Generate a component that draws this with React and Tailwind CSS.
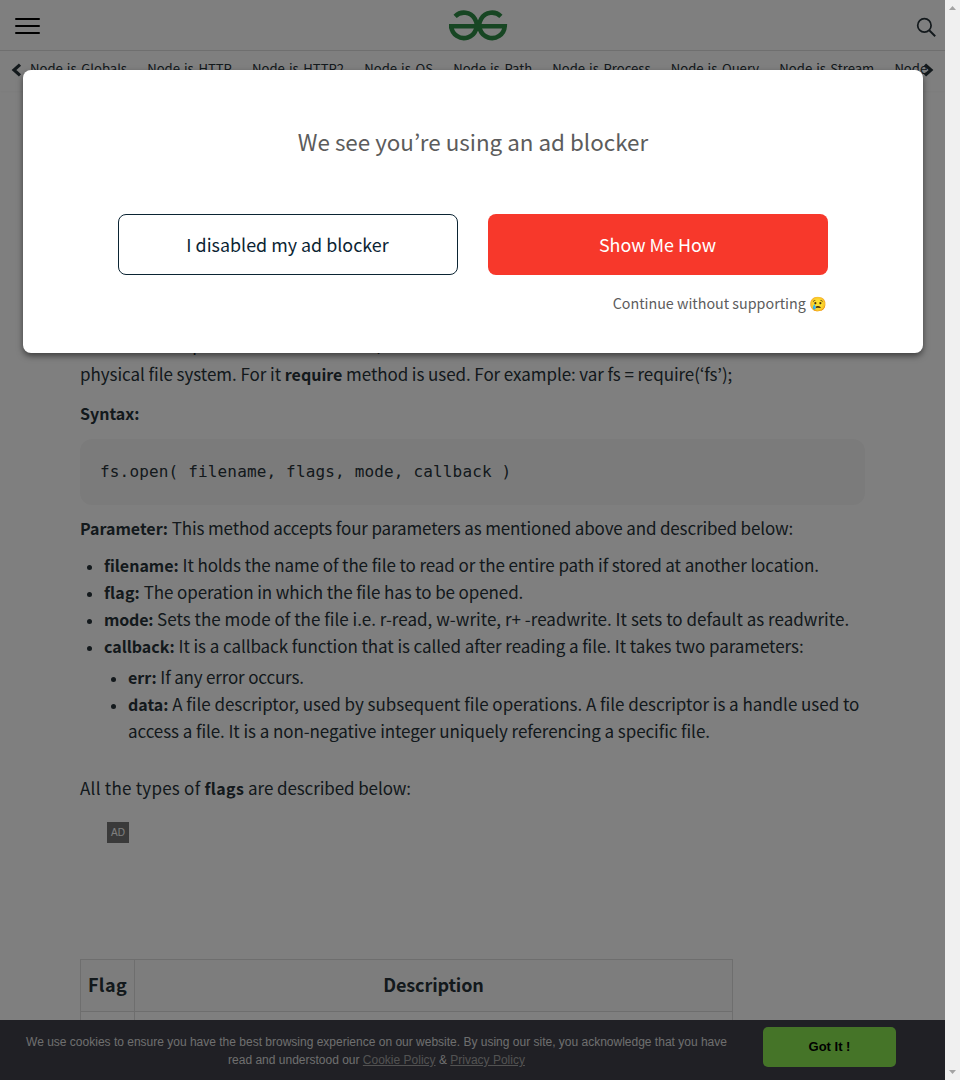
const navItems = [
  "Node.js-Globals",
  "Node.js-HTTP",
  "Node.js-HTTP2",
  "Node.js-OS",
  "Node.js-Path",
  "Node.js-Process",
  "Node.js-Query",
  "Node.js-Stream",
  "Node",
];

function B({ children, className = "" }) {
  return <strong className={`text-[16px] leading-none font-bold ${className}`}>{children}</strong>;
}

function Logo() {
  return (
    <svg width="60" height="32" viewBox="0 0 60 32" fill="none" stroke="#2f8d46" strokeWidth="4.6">
      <path d="M52.9 7.3A12.7 12.7 0 1 0 56.7 17.3H1" />
      <path d="M7.1 7.3A12.7 12.7 0 1 1 3.3 17.3" />
    </svg>
  );
}

function Chevron({ d, className }) {
  return (
    <svg width="11" height="14" viewBox="0 0 11 14" fill="none" stroke="#273239" strokeWidth="3.2" className={className}>
      <path d={d} />
    </svg>
  );
}

function Header() {
  return (
    <header className="flex h-[51px] shrink-0 items-start justify-between border-b border-[#dedede] pl-[15px] pr-2">
      <div className="flex w-[26px] flex-col gap-[5px] pt-[18px]">
        <span className="h-[2px] w-[25px] rounded bg-black" />
        <span className="h-[2px] w-[25px] rounded bg-black" />
        <span className="h-[2px] w-[25px] rounded bg-black" />
      </div>
      <div className="pr-px pt-[9px]">
        <Logo />
      </div>
      <svg width="21" height="22" viewBox="0 0 21 22" fill="none" stroke="#273239" strokeWidth="1.7" className="mt-[17px]">
        <circle cx="8.4" cy="8.4" r="6.7" />
        <path d="M13.2 13.3L19.2 19.3" strokeWidth="2" />
      </svg>
    </header>
  );
}

function TopicBar() {
  return (
    <nav className="flex h-10 shrink-0 items-start pl-[11px] pr-[11px] shadow-[0_1px_2px_rgba(0,0,0,0.03)]">
      <Chevron d="M9 1.6L3 7L9 12.4" className="mt-3 shrink-0" />
      <div className="ml-[8px] flex h-full min-w-0 flex-1 gap-[20.2px] overflow-hidden whitespace-nowrap text-[13.1px] leading-[35px]">
        {navItems.map((item) => (
          <span key={item}>{item}</span>
        ))}
      </div>
      <Chevron d="M2 1.6L8 7L2 12.4" className="mt-3 -ml-[5px] shrink-0" />
    </nav>
  );
}

function Article() {
  return (
    <main className="flex-1 whitespace-nowrap px-20 pt-[239px] text-[17px] leading-[27px]">
      <p>
        <span className="mb-[3px] block">does several operations on a file. First, we need to load the fs class which is a module to access the</span>
        <span className="whitespace-pre tracking-[-0.05px]">{"physical file system. For it "}</span>
        <B>require</B>
        <span className="whitespace-pre tracking-[-0.08px]">{" method is used. For example: var fs = require(‘fs’);"}</span>
      </p>
      <p className="mt-3">
        <B>Syntax:</B>
      </p>
      <pre className="mt-[13px] h-[66px] rounded-xl bg-[#f7f7f7] pl-5 pt-5 font-['DejaVu_Sans_Mono',monospace] text-[16px] leading-[25px] tracking-[0.162px]">
        fs.open( filename, flags, mode, callback )
      </pre>
      <p className="mt-[9px]">
        <B>Parameter:</B>
        <span className="whitespace-pre tracking-[-0.145px]">{" This method accepts four parameters as mentioned above and described below:"}</span>
      </p>
      <ul className="mt-[10px] list-disc pl-6 marker:text-[14px]">
        <li>
          <B>filename:</B>
          <span className="tracking-[-0.09px]"> It holds the name of the file to read or the entire path if stored at another location.</span>
        </li>
        <li>
          <B className="tracking-[0.15px]">flag:</B>
          <span className="tracking-[-0.1px]"> The operation in which the file has to be opened.</span>
        </li>
        <li>
          <B className="tracking-[-0.2px]">mode:</B>
          <span className="tracking-[0.02px]"> Sets the mode of the file i.e. r-read, w-write, r+ -readwrite. It sets to default as readwrite.</span>
        </li>
        <li>
          <B>callback:</B>
          <span className="tracking-[-0.065px]"> It is a callback function that is called after reading a file. It takes two parameters:</span>
          <ul className="mt-1 list-disc pl-6">
            <li>
              <B>err:</B>
              <span className="tracking-[-0.17px]"> If any error occurs.</span>
            </li>
            <li>
              <B>data:</B>
              <span className="tracking-[-0.03px]"> A file descriptor, used by subsequent file operations. A file descriptor is a handle used to</span>
              <br />
              <span className="tracking-[-0.075px]">access a file. It is a non-negative integer uniquely referencing a specific file.</span>
            </li>
          </ul>
        </li>
      </ul>
      <p className="mt-[30px]">
        <span className="whitespace-pre tracking-[0.24px]">{"All the types of "}</span>
        <B className="tracking-[0.4px]">flags</B>
        <span className="tracking-[-0.09px]"> are described below:</span>
      </p>
      <div className="ml-[27px] mt-[21px] flex h-[21px] w-[22px] items-center justify-center bg-[#757575] font-['Liberation_Sans',sans-serif] text-[10px] text-white">
        AD
      </div>
      <table className="mt-[116px] w-[653px] table-fixed border-collapse text-[18px]">
        <thead>
          <tr className="h-[52px] bg-[#fafafa]">
            <th className="w-[54px] border border-[#dddddd] p-0 pb-0.5 font-bold tracking-[0.4px]">Flag</th>
            <th className="border border-[#dddddd] p-0 pb-0.5 font-bold tracking-[-0.15px]">Description</th>
          </tr>
        </thead>
        <tbody>
          <tr className="h-[52px]">
            <td className="border border-[#dddddd]" />
            <td className="border border-[#dddddd]" />
          </tr>
        </tbody>
      </table>
    </main>
  );
}

function CookieBar() {
  return (
    <footer className="absolute inset-x-0 bottom-0 flex h-[60px] items-start bg-[#40414b] pl-[18px] font-['Liberation_Sans',sans-serif] text-[#dddddd]">
      <p className="w-[717px] whitespace-nowrap pt-[13px] text-center text-[12px] leading-[18px]">
        We use cookies to ensure you have the best browsing experience on our website. By using our site, you acknowledge that you have
        <br />
        read and understood our <a className="text-[#a5a5a5] underline">Cookie Policy</a> &amp;{" "}
        <a className="text-[#a5a5a5] underline">Privacy Policy</a>
      </p>
      <button className="ml-7 mt-[7px] h-10 w-[133px] rounded-[5px] bg-[#8ae850] text-[13px] font-bold text-black">Got It !</button>
    </footer>
  );
}

function AdBlockDialog() {
  return (
    <section className="absolute left-[23px] top-[70px] flex h-[283px] w-[900px] flex-col rounded-lg bg-white px-[95px] text-[#5c5c5c] shadow-[0_3px_6px_rgba(0,0,0,0.5)]">
      <h2 className="mt-[51px] text-center text-[22.4px] leading-[40px]">We see you’re using an ad blocker</h2>
      <div className="mt-[53px] flex gap-[30px] text-[17.9px]">
        <button className="h-[61px] w-[340px] rounded-lg border border-[#0b2433] pr-px text-[#0b2433]">I disabled my ad blocker</button>
        <button className="h-[61px] w-[340px] rounded-lg bg-[#f7382b] pr-px text-white">Show Me How</button>
      </div>
      <a className="mt-[18px] self-end pr-px text-[14.3px] leading-[20px]">Continue without supporting 😢</a>
    </section>
  );
}

function Scrollbar() {
  return (
    <div className="flex w-[15px] shrink-0 flex-col items-center justify-between bg-[#f0f0f0] py-[6px]">
      <svg width="7" height="4" viewBox="0 0 7 4" fill="#a3a3a3">
        <path d="M0 4L3.5 0L7 4Z" />
      </svg>
      <svg width="7" height="4" viewBox="0 0 7 4" fill="#a3a3a3">
        <path d="M0 0L3.5 4L7 0Z" />
      </svg>
    </div>
  );
}

export default function App() {
  return (
    <div className="flex h-[1080px] w-[960px] overflow-hidden bg-white font-['Noto_Sans_CJK_KR',sans-serif] text-[#273239]">
      <div className="relative flex min-w-0 flex-1 flex-col overflow-hidden">
        <Header />
        <TopicBar />
        <Article />
        <CookieBar />
        <div className="absolute inset-0 bg-black/50" />
        <AdBlockDialog />
      </div>
      <Scrollbar />
    </div>
  );
}
